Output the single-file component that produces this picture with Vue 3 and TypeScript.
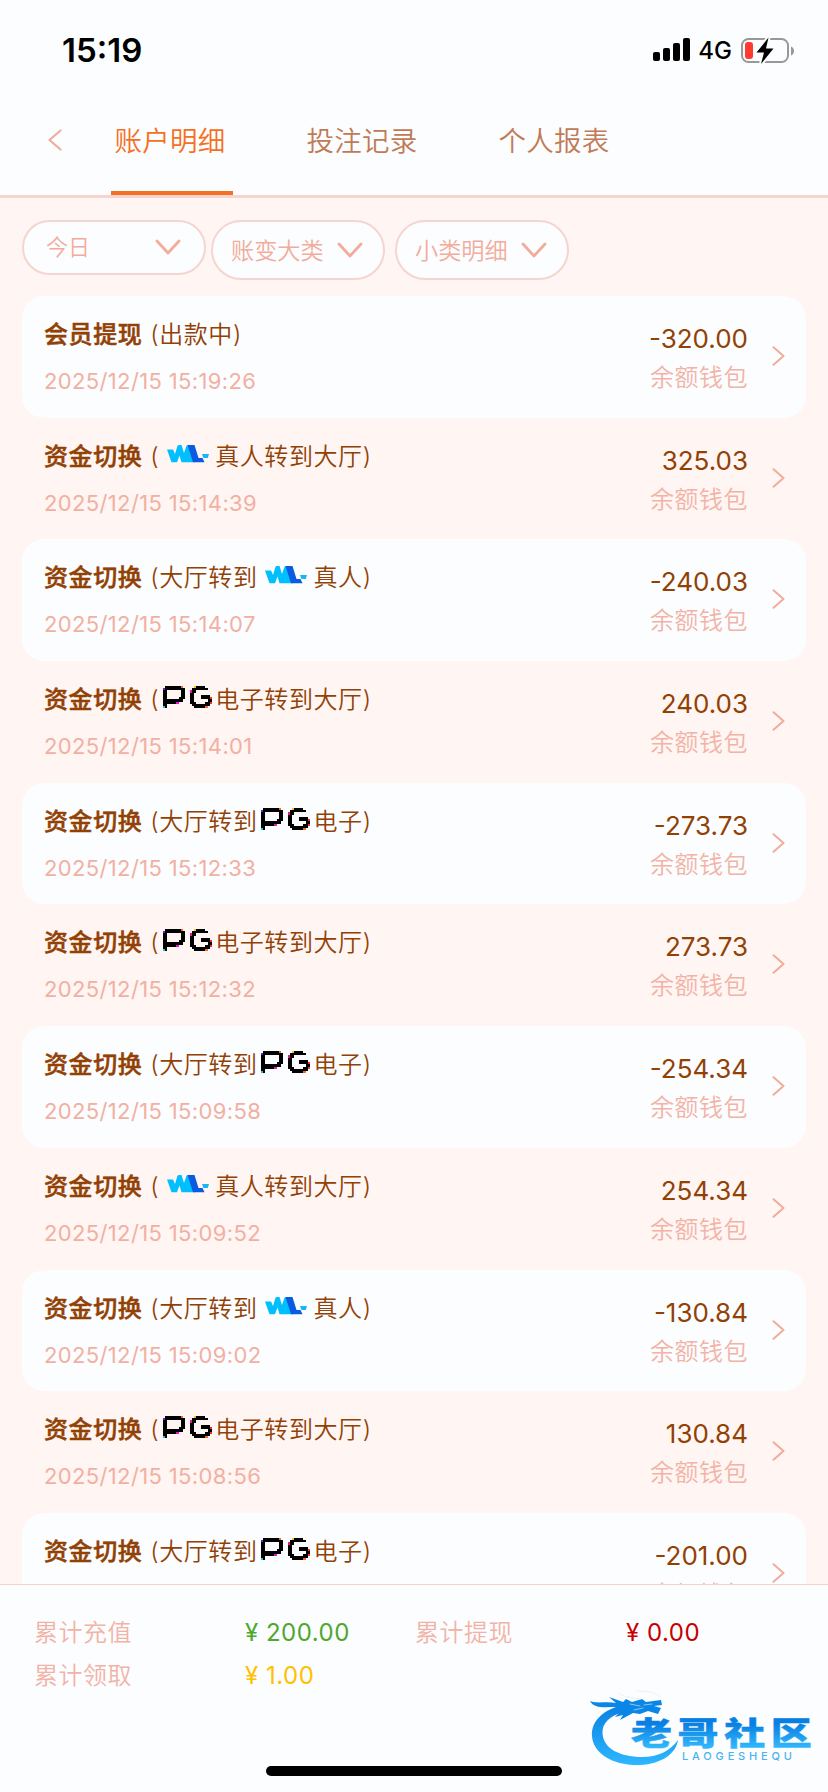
<template>
  <div class="page">
    <!-- Status bar -->
    <div class="status-bar">
      <span class="clock">15:19</span>
      <div class="status-icons">
        <svg class="signal" width="37" height="24" viewBox="0 0 37 24">
          <rect x="0" y="14" width="7" height="9" rx="2" />
          <rect x="10" y="10" width="7" height="13" rx="2" />
          <rect x="20" y="5" width="7" height="18" rx="2" />
          <rect x="30" y="0" width="7" height="23" rx="2" />
        </svg>
        <span class="network">4G</span>
        <svg class="battery" width="54" height="28" viewBox="0 0 54 28">
          <rect x="1" y="2" width="46" height="23" rx="6.5" fill="none" stroke="#98989c" stroke-width="2" />
          <path d="M50 9.5c4 1.5 4 7.5 0 9z" fill="#98989c" />
          <rect x="4" y="5" width="8" height="17" rx="3" fill="#ff3b30" />
          <path d="M27.5 0.5L15.5 15.5h7.5L20 27L32.5 11.5h-7.5z" fill="#000" stroke="#fcfdff" stroke-width="4" paint-order="stroke" />
        </svg>
      </div>
    </div>

    <!-- Tabs -->
    <nav class="tabs">
      <button class="back" aria-label="返回">
        <svg width="14" height="22" viewBox="0 0 14 22">
          <path d="M12.5 1.5L1.5 11L12.5 20.5" />
        </svg>
      </button>
      <button
        v-for="(tab, index) in tabs"
        :key="tab"
        class="tab"
        :class="{ active: index === activeTab }"
        @click="activeTab = index"
      >
        {{ tab }}
      </button>
    </nav>

    <!-- Filters and records -->
    <main class="content">
      <div class="filters">
        <button v-for="item in filters" :key="item.label" class="filter" :class="{ date: item.date }">
          <span>{{ item.label }}</span>
          <svg width="26" height="17" viewBox="0 0 26 17">
            <path d="M2 2L13 14L24 2" />
          </svg>
        </button>
      </div>

      <div class="records">
        <div v-for="item in records" :key="item.time" class="record">
          <div class="info">
            <div class="title">
              <b>{{ item.title }}</b>
              <span class="detail">
                <span>({{ item.before }}</span>
                <svg v-if="item.logo === 'wl'" class="logo-wl" width="42" height="18" viewBox="0 0 42 18">
                  <path d="M0 4.5H6L8 9L10.5 0.8Q11 0 12 0H14.5L17 8L19.5 0.8Q20 0 21 0H26L28 17.3H14.5L12.5 10.5L10 17.3H4.5z" fill="#00bfff" />
                  <path d="M20.5 0H27.5L31.5 13H35.5L37.5 17.3H26z" fill="#0a5be0" />
                  <path d="M35 9H42L40.8 13H36.4z" fill="#19b5f5" />
                </svg>
                <svg v-if="item.logo === 'pg'" class="logo-pg" width="49" height="23" viewBox="0 0 22 10.3">
                  <rect
                    v-for="(p, i) in pgPixels"
                    :key="i"
                    :x="p.x"
                    :y="p.y"
                    width="1"
                    height="1"
                    :fill="p.color"
                  />
                </svg>
                <span>{{ item.after }})</span>
              </span>
            </div>
            <div class="time">{{ item.time }}</div>
          </div>
          <div class="money">
            <div class="amount">{{ item.amount }}</div>
            <div class="wallet">余额钱包</div>
          </div>
          <svg class="arrow" width="13" height="20" viewBox="0 0 13 20">
            <path d="M1.5 1.2L11.5 10L1.5 18.8" />
          </svg>
        </div>
      </div>
    </main>

    <!-- Totals -->
    <footer class="summary">
      <div class="totals">
        <div v-for="item in totals" :key="item.label" class="total">
          <span class="total-label">{{ item.label }}</span>
          <span class="total-value" :class="item.tone">¥ {{ item.value }}</span>
        </div>
      </div>
      <div class="home-bar"></div>

      <svg class="watermark" width="230" height="84" viewBox="0 0 230 84">
        <defs>
          <linearGradient id="ring" x1="0" y1="0" x2="0" y2="1">
            <stop offset="0" stop-color="#0a80e2" />
            <stop offset="1" stop-color="#2db8ff" />
          </linearGradient>
          <linearGradient id="word" x1="0" y1="0" x2="0" y2="1">
            <stop offset="0.25" stop-color="#087fe2" />
            <stop offset="0.85" stop-color="#2fb6fb" />
          </linearGradient>
        </defs>
        <!-- Dragon curled into a ring -->
        <path
          d="M31 16C14 21 3 32 4 46C5 64 26 76 52 75C73 74 88 64 90 50C82 61 70 67 54 67C31 67 15 58 14.5 43C14 33 22 26 35 22z"
          fill="url(#ring)"
        />
        <path
          d="M2 11C10 14 18 11 28 13L21 7L35 12L38 9L44 12L54 9L58 12L73 10L74 15L66 16L73 18L70 24L60 21L52 24L45 23L32 30L35 25L27 27L32 22L22 22L29 17C17 17 6 19 2 11z"
          fill="#0a86e6"
        />
        <path d="M42 14L52 16M56 15L64 14M46 20L55 18" fill="none" stroke="#a9d6f8" stroke-width="0.8" />
        <path d="M30 3C36 7 44 8 53 9M49 1C61 1 70 3 73 8" fill="none" stroke="#e6edf2" stroke-width="0.8" />
        <text class="wm-name" transform="translate(43 54.5) scale(1.3 1)" textLength="139" fill="url(#word)" stroke="url(#word)">老哥社区</text>
        <text class="wm-latin" x="94" y="70" textLength="110" fill="#49b3ee">LAOGESHEQU</text>
      </svg>
    </footer>
  </div>
</template>

<script setup lang="ts">
import { ref } from 'vue'

interface RecordItem {
  title: string
  before: string
  logo?: 'wl' | 'pg'
  after: string
  time: string
  amount: string
}

interface TotalItem {
  label: string
  value: string
  tone: 'green' | 'red' | 'yellow'
}

const tabs = ['账户明细', '投注记录', '个人报表']
const activeTab = ref(0)

const filters = [
  { label: '今日', date: true },
  { label: '账变大类', date: false },
  { label: '小类明细', date: false }
]

const records: RecordItem[] = [
  { title: '会员提现', before: '出款中', after: '', time: '2025/12/15 15:19:26', amount: '-320.00' },
  { title: '资金切换', before: '', logo: 'wl', after: '真人转到大厅', time: '2025/12/15 15:14:39', amount: '325.03' },
  { title: '资金切换', before: '大厅转到', logo: 'wl', after: '真人', time: '2025/12/15 15:14:07', amount: '-240.03' },
  { title: '资金切换', before: '', logo: 'pg', after: '电子转到大厅', time: '2025/12/15 15:14:01', amount: '240.03' },
  { title: '资金切换', before: '大厅转到', logo: 'pg', after: '电子', time: '2025/12/15 15:12:33', amount: '-273.73' },
  { title: '资金切换', before: '', logo: 'pg', after: '电子转到大厅', time: '2025/12/15 15:12:32', amount: '273.73' },
  { title: '资金切换', before: '大厅转到', logo: 'pg', after: '电子', time: '2025/12/15 15:09:58', amount: '-254.34' },
  { title: '资金切换', before: '', logo: 'wl', after: '真人转到大厅', time: '2025/12/15 15:09:52', amount: '254.34' },
  { title: '资金切换', before: '大厅转到', logo: 'wl', after: '真人', time: '2025/12/15 15:09:02', amount: '-130.84' },
  { title: '资金切换', before: '', logo: 'pg', after: '电子转到大厅', time: '2025/12/15 15:08:56', amount: '130.84' },
  { title: '资金切换', before: '大厅转到', logo: 'pg', after: '电子', time: '', amount: '-201.00' }
]

const totals: TotalItem[] = [
  { label: '累计充值', value: '200.00', tone: 'green' },
  { label: '累计提现', value: '0.00', tone: 'red' },
  { label: '累计领取', value: '1.00', tone: 'yellow' }
]

// PG logo bitmap, one character per pixel
const pgRows = [
  '.#######o.....y####...',
  'v#########...#######..',
  '##......##..p##.......',
  '##......##..##........',
  '##......##..##...####.',
  '##.....###..##...####r',
  '#########...##......##',
  '######m.....###....##r',
  '##...........########.',
  'c#............#####o..'
]

const pgColors: Record<string, string> = {
  '#': '#000000',
  o: '#ff6a1a',
  y: '#ffc400',
  v: '#6a1fe0',
  p: '#f0148c',
  m: '#e810d8',
  r: '#f5302a',
  c: '#12c8f0'
}

const pgPixels = pgRows.flatMap((row, y) =>
  [...row]
    .map((c, x) => ({ x, y, color: pgColors[c] }))
    .filter((p) => p.color)
)
</script>

<style>
body {
  margin: 0;
  background: #fcfdff;
}
</style>

<style scoped>
.page {
  width: 828px;
  height: 1792px;
  display: flex;
  flex-direction: column;
  overflow: hidden;
  background: #fcfdff;
  font-family: Inter, 'Noto Sans CJK SC', sans-serif;
  font-weight: 350;
}

button {
  margin: 0;
  padding: 0;
  border: none;
  background: none;
  font: inherit;
  cursor: pointer;
}

path {
  stroke-linecap: round;
  stroke-linejoin: round;
}

/* Status bar */
.status-bar {
  height: 88px;
  flex: none;
  display: flex;
  justify-content: space-between;
  box-sizing: border-box;
  padding: 32px 33px 0 62px;
  color: #000;
}

.clock {
  font-size: 33px;
  font-weight: 600;
  line-height: 37px;
}

.status-icons {
  display: flex;
  align-items: flex-start;
  padding-top: 5px;
}

.signal {
  margin-top: 1px;
}

.network {
  margin: 0 9px 0 8px;
  font-size: 24px;
  font-weight: 500;
  line-height: 28px;
}

/* Tabs */
.tabs {
  height: 110px;
  flex: none;
  display: flex;
  box-sizing: border-box;
  border-bottom: 3px solid #f5d5cf;
}

.back {
  width: 111px;
  padding: 1px 0 0 48px;
  text-align: left;
}

.back path,
.filter path,
.arrow path {
  fill: none;
  stroke: #f2ac9c;
}

.back path {
  stroke-width: 2.2;
}

.tab {
  width: 122px;
  margin-right: 70px;
  padding: 2px 4px 0 0;
  border-bottom: 4px solid transparent;
  color: #c07a55;
  font-size: 27.5px;
  letter-spacing: 0.3px;
  line-height: 40px;
  white-space: nowrap;
}

.tab.active {
  border-bottom-color: #f57023;
  color: #f57023;
}

/* Filters */
.content {
  flex: 1;
  min-height: 0;
  overflow: hidden;
  padding: 22px 22px 0;
  background: #fff5f2;
}

.filters {
  display: flex;
  align-items: flex-start;
  height: 76px;
}

.filter {
  width: 174px;
  height: 60px;
  margin-right: 10px;
  display: flex;
  align-items: center;
  justify-content: space-between;
  box-sizing: border-box;
  padding: 0 20px 0 18px;
  border: 2px solid #f5d5cf;
  border-radius: 30px;
  background: #fcfdff;
  color: #f2ac9c;
  font-size: 23.2px;
  white-space: nowrap;
}

.filter span {
  margin-bottom: 2px;
}

.filter.date {
  width: 184px;
  height: 55px;
  margin-right: 5px;
  padding: 0 23px 0 22px;
  font-size: 22px;
}

.filter.date span {
  margin-bottom: 5px;
}

.filter path {
  stroke-width: 2.8;
}

/* Records */
.record {
  display: flex;
  height: 121.7px;
  box-sizing: border-box;
  padding: 0 21px 0 22px;
  border-radius: 22px;
}

.record:nth-child(odd) {
  background: #fcfdff;
}

.info {
  flex: 1;
  padding-top: 22px;
}

.title {
  display: flex;
  height: 34px;
  color: #914105;
  font-size: 24px;
  letter-spacing: 0.57px;
  line-height: 34px;
  white-space: nowrap;
}

.title b {
  margin-right: 8px;
  font-weight: 500;
  -webkit-text-stroke: 0.5px #914105;
}

.detail {
  display: flex;
  align-items: flex-start;
}

.logo-wl {
  margin: 5px 6.5px 0 7.5px;
}

.logo-pg {
  margin: 3px 3.5px 0 3.5px;
  shape-rendering: crispEdges;
}

.time {
  margin-top: 14px;
  color: #f2b0a2;
  font-size: 22px;
  font-weight: 400;
  letter-spacing: 0.36px;
  line-height: 30px;
}

.money {
  padding-top: 24px;
  text-align: right;
}

.amount {
  color: #914105;
  font-size: 26px;
  font-weight: 400;
  line-height: 38px;
}

.wallet {
  color: #f2b3a6;
  font-size: 24px;
  letter-spacing: 0.5px;
  line-height: 40px;
}

.arrow {
  margin: 50px 0 0 24px;
}

.arrow path {
  stroke-width: 2;
}

/* Totals */
.summary {
  position: relative;
  height: 208px;
  flex: none;
  box-sizing: border-box;
  border-top: 1px solid #f8d0c8;
  background: #fcfdff;
}

.totals {
  display: grid;
  grid-template-columns: 381px 381px;
  grid-auto-rows: 43px;
  padding: 26px 0 0 34px;
}

.total {
  display: flex;
  font-size: 24px;
  letter-spacing: 0.5px;
  line-height: 43px;
}

.total-label {
  width: 211px;
  color: #f2b3a6;
}

.total-value {
  font-weight: 400;
}

.green {
  color: #4ea72e;
}

.red {
  color: #c80000;
}

.yellow {
  color: #ffc000;
}

.home-bar {
  width: 296px;
  height: 10px;
  margin: 69px auto 0;
  border-radius: 5px;
  background: #000;
}

.watermark {
  position: absolute;
  top: 105px;
  left: 588px;
}

.wm-name {
  font-size: 31.5px;
  font-weight: 900;
  stroke-width: 0.5px;
}

.wm-latin {
  font-size: 11px;
  font-weight: 500;
}
</style>
